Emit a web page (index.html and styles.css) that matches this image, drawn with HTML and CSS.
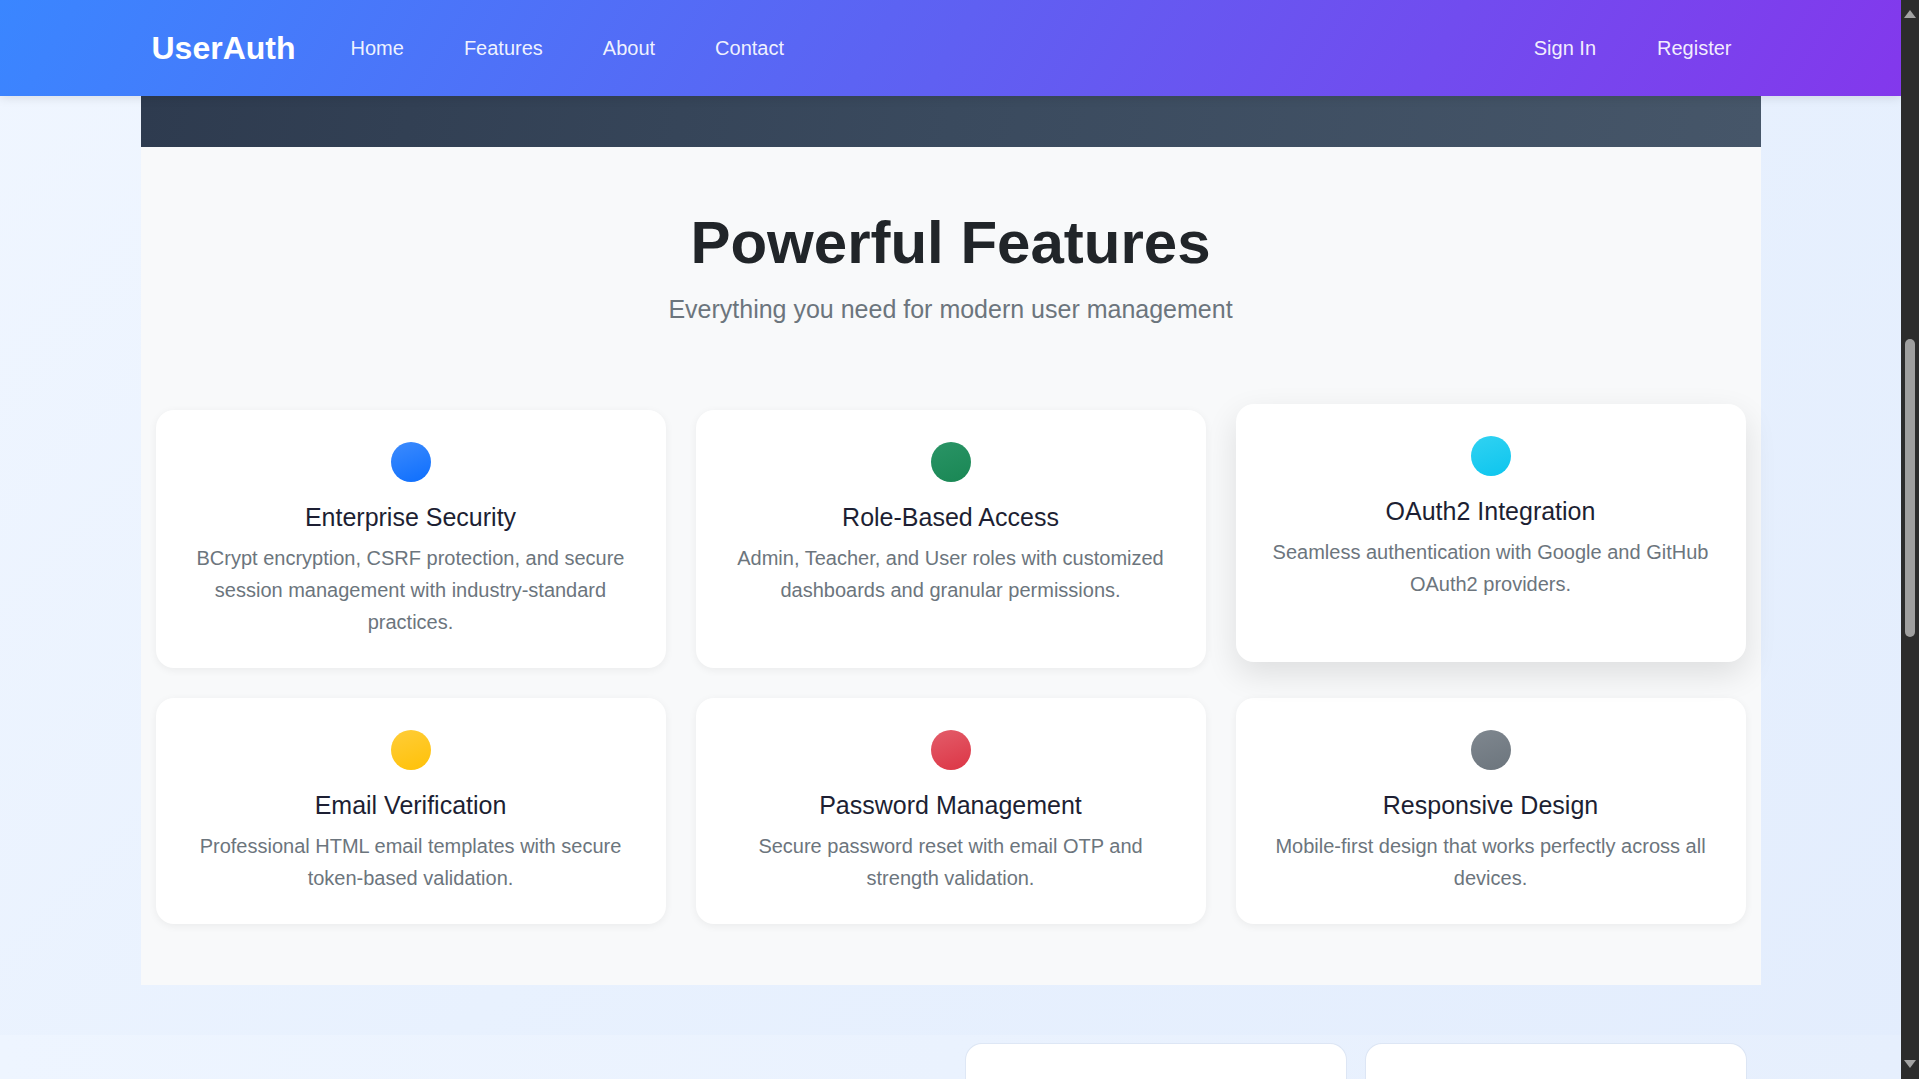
FILE: index.html
```html
<!DOCTYPE html>
<html lang="en">
<head>
<meta charset="utf-8">
<title>UserAuth - Features</title>
<link rel="stylesheet" href="styles.css">
</head>
<body>
<div class="screen">
  <div class="viewport">
    <header class="navbar">
      <div class="nav-inner">
        <a class="brand" href="#">UserAuth</a>
        <nav class="nav-links">
          <a href="#">Home</a>
          <a href="#">Features</a>
          <a href="#">About</a>
          <a href="#">Contact</a>
        </nav>
        <nav class="nav-auth">
          <a href="#">Sign In</a>
          <a href="#">Register</a>
        </nav>
      </div>
    </header>

    <div class="hero-end"></div>

    <section class="features">
      <div class="features-head">
        <h2>Powerful Features</h2>
        <p>Everything you need for modern user management</p>
      </div>
      <div class="grid">
        <div class="card">
          <div class="icon icon-blue"></div>
          <h3>Enterprise Security</h3>
          <p>BCrypt encryption, CSRF protection, and secure session management with industry-standard practices.</p>
        </div>
        <div class="card">
          <div class="icon icon-green"></div>
          <h3>Role-Based Access</h3>
          <p>Admin, Teacher, and User roles with customized dashboards and granular permissions.</p>
        </div>
        <div class="card card-hover">
          <div class="icon icon-cyan"></div>
          <h3>OAuth2 Integration</h3>
          <p>Seamless authentication with Google and GitHub OAuth2 providers.</p>
        </div>
        <div class="card">
          <div class="icon icon-yellow"></div>
          <h3>Email Verification</h3>
          <p>Professional HTML email templates with secure token-based validation.</p>
        </div>
        <div class="card">
          <div class="icon icon-red"></div>
          <h3>Password Management</h3>
          <p>Secure password reset with email OTP and strength validation.</p>
        </div>
        <div class="card">
          <div class="icon icon-gray"></div>
          <h3>Responsive Design</h3>
          <p>Mobile-first design that works perfectly across all devices.</p>
        </div>
      </div>
    </section>

    <section class="next">
      <div class="next-inner">
        <div class="panel"></div>
        <div class="panel"></div>
      </div>
    </section>
  </div>

  <div class="scrollbar">
    <div class="sb-btn"><span class="tri-up"></span></div>
    <div class="sb-track"><div class="sb-thumb"></div></div>
    <div class="sb-btn sb-btn-down"><span class="tri-down"></span></div>
  </div>
</div>
</body>
</html>
```

FILE: styles.css
```css
* {
  box-sizing: border-box;
}

html, body {
  margin: 0;
  padding: 0;
  height: 100%;
  overflow: hidden;
}

body {
  font-family: "Liberation Sans", Arial, sans-serif;
  color: #212529;
}

.screen {
  display: flex;
  width: 1919px;
  height: 1079px;
}

.viewport {
  flex: 1;
  height: 1079px;
  overflow: hidden;
  background: linear-gradient(135deg, #f0f6ff 0%, #e8f1fe 50%, #e3edfd 100%);
}

/* NAVBAR */
.navbar {
  height: 96px;
  background: linear-gradient(120deg, #3a86ff 0%, #5f60f2 50%, #8338ec 100%);
  box-shadow: 0 2px 10px rgba(0, 0, 0, 0.1);
  position: relative;
  z-index: 2;
}

.nav-inner {
  width: 1620px;
  margin: 0 auto;
  height: 100%;
  display: flex;
  align-items: center;
  padding: 0 29px 0 11px;
}

.brand {
  color: #ffffff;
  font-size: 32px;
  font-weight: 700;
  text-decoration: none;
}

.nav-links,
.nav-auth {
  display: flex;
  align-items: center;
  gap: 60px;
}

.nav-links {
  margin-left: 55px;
}

.nav-auth {
  margin-left: auto;
  gap: 61px;
}

.nav-links a,
.nav-auth a {
  color: rgba(255, 255, 255, 0.92);
  font-size: 20px;
  text-decoration: none;
}

/* HERO END */
.hero-end {
  width: 1620px;
  height: 51px;
  margin: 0 auto;
  background: linear-gradient(100deg, #2e3b4f 0%, #3a4a5e 50%, #465669 100%);
}

/* FEATURES */
.features {
  width: 1620px;
  margin: 0 auto;
  background: #f8f9fa;
  padding: 60px 15px 61px;
}

.features-head {
  text-align: center;
  margin-bottom: 81px;
}

.features-head h2 {
  margin: 0 0 12px;
  font-size: 60px;
  line-height: 1.2;
  font-weight: 700;
  color: #212529;
}

.features-head p {
  margin: 0;
  font-size: 25px;
  line-height: 1.5;
  color: #6c757d;
}

.grid {
  display: grid;
  grid-template-columns: repeat(3, 1fr);
  gap: 30px;
}

.card {
  background: #ffffff;
  border-radius: 18px;
  padding: 32px 32px 30px;
  text-align: center;
  box-shadow: 0 2px 8px rgba(0, 0, 0, 0.06);
}

.card-hover {
  transform: translateY(-6px);
  box-shadow: 0 12px 32px rgba(0, 0, 0, 0.11);
}

.icon {
  width: 40px;
  height: 40px;
  border-radius: 50%;
  margin: 0 auto 20px;
}

.icon-blue { background: linear-gradient(160deg, #3d8bfd 0%, #0d6efd 100%); }
.icon-green { background: linear-gradient(160deg, #2a9466 0%, #198754 100%); }
.icon-cyan { background: linear-gradient(160deg, #31d2f2 0%, #0dc5ee 100%); }
.icon-yellow { background: linear-gradient(160deg, #ffcd39 0%, #ffc107 100%); }
.icon-red { background: linear-gradient(160deg, #e35d6a 0%, #dc3545 100%); }
.icon-gray { background: linear-gradient(160deg, #7f878f 0%, #6c757d 100%); }

.card h3 {
  margin: 0 0 10px;
  font-size: 25px;
  line-height: 30px;
  font-weight: 400;
  color: #1d1f33;
}

.card p {
  margin: 0;
  font-size: 20px;
  line-height: 32px;
  color: #6c757d;
}

/* NEXT SECTION */
.next {
  margin-top: 50px;
  height: 200px;
  background: linear-gradient(90deg, #eef5ff 0%, #eaf2fe 50%, #e6effd 100%);
  padding-top: 9px;
}

.next-inner {
  width: 1620px;
  margin: 0 auto;
  padding: 0 15px;
  display: flex;
  justify-content: flex-end;
  gap: 20px;
}

.panel {
  width: 380px;
  height: 120px;
  background: #ffffff;
  border-radius: 16px 16px 0 0;
  box-shadow: 0 0 0 1px rgba(210, 220, 235, 0.5);
}

/* SCROLLBAR */
.scrollbar {
  width: 18px;
  height: 1079px;
  background: #2c2c2c;
  display: flex;
  flex-direction: column;
}

.sb-btn {
  height: 18px;
  padding-top: 10px;
  padding-left: 3px;
}

.sb-btn-down {
  padding-top: 0;
  height: 19px;
}

.tri-up {
  display: block;
  width: 0;
  height: 0;
  border-left: 6px solid transparent;
  border-right: 6px solid transparent;
  border-bottom: 8px solid #a3a3a3;
}

.tri-down {
  display: block;
  width: 0;
  height: 0;
  border-left: 6px solid transparent;
  border-right: 6px solid transparent;
  border-top: 8px solid #a3a3a3;
}

.sb-track {
  flex: 1;
  padding-top: 321px;
}

.sb-thumb {
  width: 10px;
  height: 298px;
  margin-left: 4px;
  border-radius: 5px;
  background: #9f9f9f;
}
```
